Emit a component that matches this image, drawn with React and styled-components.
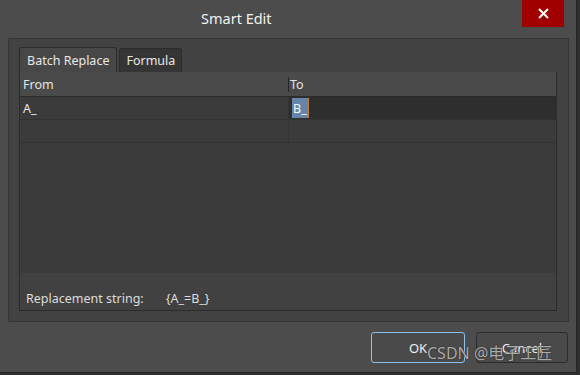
import React from "react";
import styled, { createGlobalStyle } from "styled-components";

const Global = createGlobalStyle`
  html, body { margin: 0; padding: 0; background: #2e2e2e; }
  body { font-family: "Noto Sans", "Open Sans", sans-serif; width: 580px; height: 375px; overflow: hidden; }
`;

const Dialog = styled.div`
  position: relative;
  width: 576px;
  height: 372px;
  background: #4c4c4c;
  border-right: 1px solid #262626;
  border-bottom: 1px solid #262626;
  display: flex;
  flex-direction: column;
  color: #e8e8e8;
`;

const TitleBar = styled.div`
  height: 38px;
  display: flex;
  align-items: flex-start;
`;

const Title = styled.div`
  margin-left: 201px;
  margin-top: 8px;
  font-size: 14.5px;
  color: #f2f2f2;
  flex: 1;
`;

const CloseButton = styled.div`
  width: 42px;
  height: 27px;
  margin-right: 12px;
  background: #a00000;
  display: flex;
  align-items: center;
  justify-content: center;
`;

const Panel = styled.div`
  margin: 0 7px 0 8px;
  height: 284px;
  box-sizing: border-box;
  background: #424242;
  border: 1px solid #353535;
  padding: 8px 11px 10px 10px;
  display: flex;
  flex-direction: column;
`;

const Tabs = styled.div`
  display: flex;
  align-items: flex-end;
  gap: 2px;
  height: 25px;
`;

const Tab = styled.div`
  height: ${(p) => (p.$active ? 25 : 24)}px;
  box-sizing: border-box;
  padding: 0 ${(p) => (p.$active ? 7 : 6)}px;
  display: flex;
  align-items: center;
  font-size: 12.5px;
  background: ${(p) => (p.$active ? "#474747" : "#353535")};
  border: 1px solid #2b2b2b;
  border-bottom: none;
  border-radius: 3px 3px 0 0;
  color: #e8e8e8;
`;

const Content = styled.div`
  flex: 1;
  border: 1px solid #2b2b2b;
  border-top: none;
  background: #414141;
  display: flex;
  flex-direction: column;
`;

const Grid = styled.div`
  height: 201px;
  background: #3b3b3b;
  display: flex;
  flex-direction: column;
`;

const HeaderRow = styled.div`
  height: 24px;
  display: grid;
  grid-template-columns: 268px 1fr;
  background: #4a4a4a;
  border-bottom: 1px solid #2a2a2a;
`;

const HeaderCell = styled.div`
  display: flex;
  align-items: center;
  padding-left: ${(p) => (p.$divider ? 2 : 3)}px;
  font-size: 12.5px;
  color: #e4e4e4;
  position: relative;
  ${(p) =>
    p.$divider &&
    `&::before { content: ""; position: absolute; left: 0; top: 5px; height: 15px; width: 1px; background: #262626; }`}
`;

const Row = styled.div`
  height: 22px;
  display: grid;
  grid-template-columns: 268px 1fr;
  border-bottom: 1px solid #333333;
`;

const Cell = styled.div`
  display: flex;
  align-items: center;
  padding-left: 3px;
  font-size: 12.5px;
  color: #e8e8e8;
  background: ${(p) => (p.$dark ? "#2e2e2e" : "transparent")};
  border-left: ${(p) => (p.$second ? "1px solid #343434" : "none")};
`;

const Selected = styled.span`
  background: #6685a8;
  color: #f4f4f4;
  height: 20px;
  display: inline-flex;
  align-items: center;
  padding: 0 1px;
  border-right: 1px solid #c07a3a;
`;

const Summary = styled.div`
  flex: 1;
  display: flex;
  align-items: center;
  padding-left: 6px;
  padding-top: 14px;
  font-size: 12.5px;
  color: #dcdcdc;
`;

const SummaryValue = styled.span`
  margin-left: 22px;
`;

const Footer = styled.div`
  flex: 1;
  display: flex;
  justify-content: flex-end;
  align-items: flex-start;
  padding: 10px 8px 0 0;
  gap: 11px;
`;

const Button = styled.div`
  width: ${(p) => p.$w}px;
  height: 31px;
  box-sizing: border-box;
  border: 1px solid ${(p) => (p.$default ? "#8fc0ec" : "#2c2c2c")};
  border-radius: 3px;
  background: #4a4a4a;
  display: flex;
  align-items: center;
  justify-content: center;
  font-size: 13px;
  color: #f0f0f0;
`;

const Watermark = styled.div`
  position: absolute;
  left: 427px;
  top: 340px;
  font-size: 16px;
  font-family: "Noto Sans", "Noto Sans CJK SC", sans-serif;
  color: rgba(215, 215, 215, 0.75);
  text-shadow: 0 0 1px #2a2a2a, 0 0 1px #2a2a2a;
  white-space: nowrap;
`;

export default function App() {
  return (
    <>
      <Global />
      <Dialog>
        <TitleBar>
          <Title>Smart Edit</Title>
          <CloseButton>
            <svg width="11" height="11" viewBox="0 0 11 11">
              <path d="M1 1 L10 10 M10 1 L1 10" stroke="#fff" strokeWidth="2" />
            </svg>
          </CloseButton>
        </TitleBar>
        <Panel>
          <Tabs>
            <Tab $active>Batch Replace</Tab>
            <Tab>Formula</Tab>
          </Tabs>
          <Content>
            <Grid>
              <HeaderRow>
                <HeaderCell>From</HeaderCell>
                <HeaderCell $divider>To</HeaderCell>
              </HeaderRow>
              <Row>
                <Cell>A_</Cell>
                <Cell $second $dark>
                  <Selected>B_</Selected>
                </Cell>
              </Row>
              <Row>
                <Cell />
                <Cell $second />
              </Row>
            </Grid>
            <Summary>
              Replacement string:
              <SummaryValue>{"{A_=B_}"}</SummaryValue>
            </Summary>
          </Content>
        </Panel>
        <Footer>
          <Button $default $w={94}>OK</Button>
          <Button $w={92}>Cancel</Button>
        </Footer>
        <Watermark>CSDN @电子工匠</Watermark>
      </Dialog>
    </>
  );
}
